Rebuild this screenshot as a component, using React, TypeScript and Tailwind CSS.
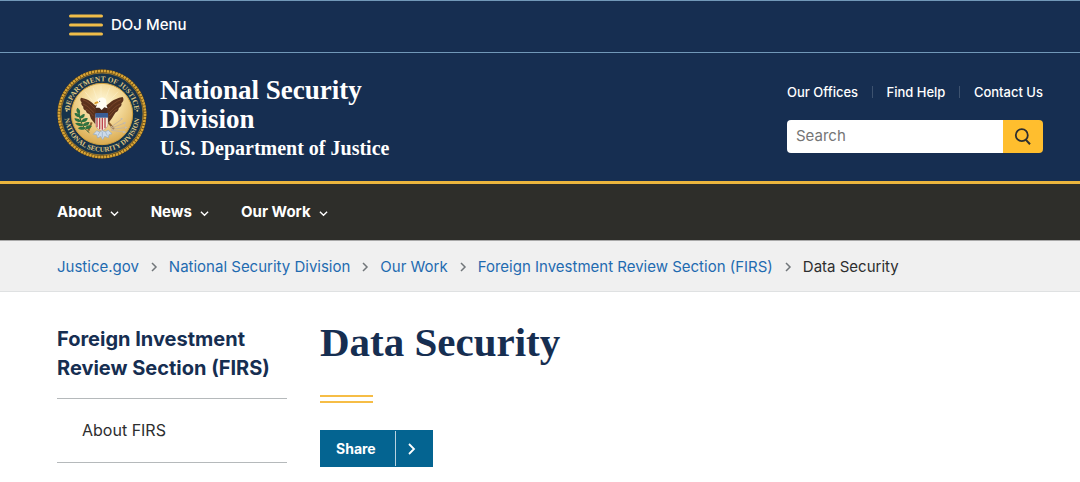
import type { ReactNode } from "react";

const sans = "font-['Inter','Liberation_Sans',sans-serif]";
const serif = "font-['Liberation_Serif',serif]";

function Chevron({ down = false, className = "" }: { down?: boolean; className?: string }) {
  return (
    <svg
      aria-hidden="true"
      viewBox="0 0 10 10"
      className={className}
      fill="none"
      stroke="currentColor"
      strokeWidth="1.5"
    >
      <path d={down ? "M1 3l4 4 4-4" : "M3 1l4 4-4 4"} />
    </svg>
  );
}

function Seal() {
  return (
    <svg viewBox="0 0 270 270" className="size-[90px] shrink-0" role="img" aria-label="Department of Justice seal">
      <defs>
        <radialGradient id="sun" cx="50%" cy="32%" r="65%">
          <stop offset="0" stopColor="#fff9dc" />
          <stop offset="0.45" stopColor="#f5dda0" />
          <stop offset="1" stopColor="#dcae55" />
        </radialGradient>
        <path id="top-arc" d="M37 135a98 98 0 0 1 196 0" />
        <path id="bottom-arc" d="M22 135a113 113 0 0 0 226 0" />
      </defs>
      <circle cx="135" cy="135" r="134" fill="#5b4314" />
      <circle cx="135" cy="135" r="129" fill="none" stroke="#d9a536" strokeWidth="8" strokeDasharray="7 2" />
      <circle cx="135" cy="135" r="123" fill="#16334b" stroke="#b98d35" strokeWidth="2" />
      <circle cx="135" cy="135" r="92" fill="url(#sun)" stroke="#cfa040" strokeWidth="3" />
      <g fill="#dfc583" fontFamily="'Liberation Serif', serif" fontWeight="700" textAnchor="middle">
        <text fontSize="22">
          <textPath href="#top-arc" startOffset="50%">DEPARTMENT OF JUSTICE</textPath>
        </text>
        <text fontSize="21">
          <textPath href="#bottom-arc" startOffset="50%">NATIONAL SECURITY DIVISION</textPath>
        </text>
      </g>
      <circle cx="29" cy="125" r="3" fill="#dfc583" />
      <circle cx="241" cy="125" r="3" fill="#dfc583" />
      <g stroke="#fff8d9" strokeWidth="2" opacity="0.65">
        <path d="M132 88V50M120 90l-12-34M108 98L84 68M145 90l13-34M156 98l27-30" />
      </g>
      <path d="M120 113C106 103 98 90 72 86q-5 7 2 14-4 6 5 13-2 7 8 12 0 7 10 10l5 14 12 15 9 5z" fill="#5b321c" />
      <path d="M144 113c14-10 22-23 53-29 5 7 2 14-4 19 3 6-4 12-8 15 1 7-7 12-10 13l-10 17-13 17-9 5z" fill="#5b321c" />
      <g fill="none" stroke="#8a5230" strokeWidth="2">
        <path d="M77 92c17 5 26 17 39 30M78 105c14 5 20 14 33 26M86 120c9 4 15 11 23 21M192 92c-17 5-27 17-40 30M190 105c-14 5-20 14-33 26M180 120c-9 4-14 11-23 21" />
      </g>
      <path d="M118 137l-4-25 9-9h19l10 10-3 24z" fill="#4a2b1d" />
      <path d="M116 116c5-7 2-13 4-20 3-11 20-14 26-5 4 8 0 18 6 27l-10-3-8 8-7-7z" fill="#fffdf3" />
      <path d="M122 97l-7 2q-5 3-2 7l12-4z" fill="#d99b28" />
      <circle cx="128" cy="97" r="1.5" fill="#292b2d" />
      <path d="M104 160l-10 25M154 160l17 20" stroke="#8b602f" strokeWidth="6" />
      <path d="M115 136h38v29q-1 14-19 21-18-7-19-21z" fill="#f2ead6" stroke="#8e6060" />
      <path d="M120 146v29M128 146v35M136 146v36M144 146v32" stroke="#bd4650" strokeWidth="4" />
      <path d="M115 132h38v14h-38z" fill="#395d95" />
      <path d="M119 185l-10 11 10 1 3 10 9-5 6 10 6-10 11 4 2-9 9-3-11-10-9 4-9-3-8 4z" fill="#cddae8" stroke="#91aac5" strokeWidth="2" />
      <path d="M128 189l-5 11M136 189v16M145 188l6 12" stroke="#8eacc9" strokeWidth="2" />
      <path d="M66 132c5 24 7 41 31 59" fill="none" stroke="#315b34" strokeWidth="3" />
      <path
        d="M66 133q-9-7-4-14 8 6 4 14M69 143q-14-2-14-9 11 1 14 9M68 147q8-10 13-10 1 9-13 10M71 157q-14 0-16-7 11 0 16 7M73 158q8-11 17-9-2 9-17 9M76 169q-13 2-18-5 11-2 18 5M79 169q5-9 16-8-2 9-16 8M84 178q-12 5-18 0 7-6 18 0M86 177q7-9 16-5-4 9-16 5"
        fill="#2f7140"
        stroke="#2f7140"
        strokeWidth="4"
      />
      <path d="M161 178l40-15M162 181l45-5M162 184l40 5M159 176l35-25" stroke="#c9b69a" strokeWidth="3" />
      <path d="M197 147l-7 1 5 6zM207 159l-9 1 5 7zM212 175l-9-3 1 8zM208 190l-9-5-1 8z" fill="#c5bcae" />
    </svg>
  );
}

function NavItem({ children }: { children: ReactNode }) {
  return (
    <button type="button" className="flex items-center gap-2 text-[15px] leading-6 font-bold text-white">
      {children}
      <Chevron down className="mt-[3px] size-[9px]" />
    </button>
  );
}

const crumbs = ["Justice.gov", "National Security Division", "Our Work", "Foreign Investment Review Section (FIRS)"];

export default function App() {
  return (
    <div className={`bg-white text-[#2d2e2f] ${sans}`}>
      <header className="bg-[#162e51] text-white">
        <div className="border-y border-[#7198b8] pt-3 pb-[15px] pl-[69px]">
          <button type="button" className="flex items-center gap-2 text-[15px] leading-6 font-medium">
            <svg aria-hidden="true" viewBox="0 0 34 22" className="h-[22px] w-[34px]" stroke="#f0bd49" strokeWidth="3" strokeLinecap="round">
              <path d="M1.5 2h31M1.5 11h31M1.5 20h31" />
            </svg>
            DOJ Menu
          </button>
        </div>
        <div className="flex items-start justify-between border-b-3 border-[#ebb53d] pt-4 pr-[37px] pb-[18px] pl-[57px]">
          <a href="#" className="flex items-start gap-[13px]">
            <Seal />
            <div className={`pt-[7px] font-bold ${serif}`}>
              <div className="w-[240px] text-[27px] leading-[29px]">National Security Division</div>
              <div className="text-[20px] leading-[29px]">U.S. Department of Justice</div>
            </div>
          </a>
          <div className="w-64 pt-[13px]">
            <nav aria-label="Secondary" className="flex items-center justify-between text-[13px] leading-5 font-medium">
              <a href="#">Our Offices</a>
              <span className="h-3 w-px bg-[#3d526f]" />
              <a href="#">Find Help</a>
              <span className="h-3 w-px bg-[#3d526f]" />
              <a href="#">Contact Us</a>
            </nav>
            <form className="mt-[18px] flex h-[33px] overflow-hidden rounded">
              <input
                type="search"
                aria-label="Search"
                placeholder="Search"
                className="min-w-0 flex-1 bg-white px-[9px] text-[15px] text-black placeholder:text-[#757575]"
              />
              <button type="button" aria-label="Submit search" className="flex w-10 items-center justify-center bg-[#ffbe2e] text-[#2d2e2f]">
                <svg aria-hidden="true" viewBox="0 0 18 18" className="size-[18px]" fill="none" stroke="currentColor" strokeWidth="1.8">
                  <circle cx="7.8" cy="7.2" r="6" />
                  <path d="M11.7 11.6l4.3 4.6" strokeWidth="2" />
                </svg>
              </button>
            </form>
          </div>
        </div>
      </header>

      <nav aria-label="Primary" className="flex gap-8 bg-[#2e2e2a] px-[57px] py-4">
        <NavItem>About</NavItem>
        <NavItem>News</NavItem>
        <NavItem>Our Work</NavItem>
      </nav>

      <nav aria-label="Breadcrumb" className="border-t border-b border-t-[#a9a9a9] border-b-[#dfe1e2] bg-[#f0f0f0] pt-[14px] pb-3 pl-[57px]">
        <ol className="flex items-center text-[15px] leading-6">
          {crumbs.map((crumb) => (
            <li key={crumb} className="flex items-center whitespace-nowrap">
              <a href="#" className="text-[#1f6bb0]">{crumb}</a>
              <Chevron className="mx-[10px] size-[10px] text-[#71767a]" />
            </li>
          ))}
          <li aria-current="page">Data Security</li>
        </ol>
      </nav>

      <div className="flex items-start gap-[33px] pr-[37px] pl-[57px]">
        <aside className="w-[230px] shrink-0 pt-[33px]">
          <h2 className="border-b border-[#b5b9bb] pb-[15px] text-[20px] leading-[29px] font-bold text-[#162e51]">
            Foreign Investment Review Section (FIRS)
          </h2>
          <a href="#" className="block border-b border-[#b5b9bb] py-5 pl-[25px] text-[16px] leading-[23px]">
            About FIRS
          </a>
        </aside>
        <main className="flex-1 pt-[25px]">
          <h1 className={`text-[41px] leading-[50px] font-bold text-[#162e51] ${serif}`}>Data Security</h1>
          <div className="mt-7 h-2 w-[53px] border-y-2 border-[#f6bd46]" />
          <button type="button" className="mt-[27px] flex h-[37px] items-stretch bg-[#046491] text-[14px] font-bold text-white">
            <span className="flex w-[75px] items-center pl-4">Share</span>
            <span className="my-px w-px bg-[#b8d2df]" />
            <span className="flex w-[37px] items-center pl-[9px]">
              <svg aria-hidden="true" viewBox="0 0 14 14" className="size-[14px]" fill="none" stroke="currentColor" strokeWidth="1.8">
                <path d="M4 2l5 5-5 5" />
              </svg>
            </span>
          </button>
        </main>
      </div>
    </div>
  );
}
